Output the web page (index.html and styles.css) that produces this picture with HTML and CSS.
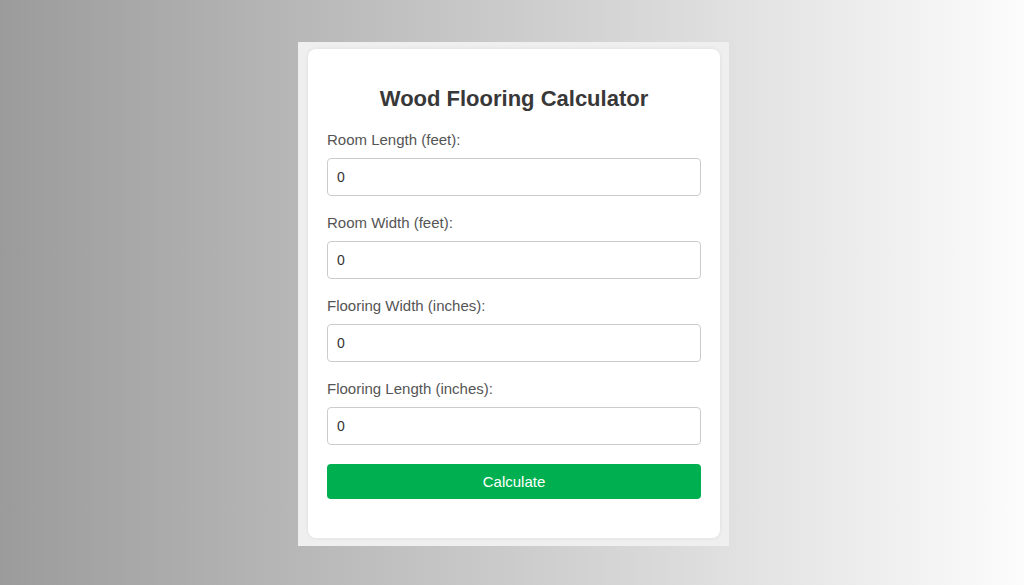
FILE: index.html
```html
<!DOCTYPE html>
<html lang="en">
    <head>
        <meta charset="UTF-8">
        <meta name="viewport" content="width=device-width, initial-scale=1.0">
        <title>Wood Flooring Calculator</title>
        <link rel="stylesheet" href="styles.css">
    </head>
    <body>
        <div class="frame">
            <div class="calculator">
                <h2>Wood Flooring Calculator</h2>
                <label for="roomLength">Room Length (feet):</label>
                <input type="number" id="roomLength" value="0">

                <label for="roomWidth">Room Width (feet):</label>
                <input type="number" id="roomWidth" value="0">

                <label for="flooringWidth">Flooring Width (inches):</label>
                <input type="number" id="flooringWidth" value="0">

                <label for="flooringLength">Flooring Length (inches):</label>
                <input type="number" id="flooringLength" value="0">

                <button type="button">Calculate</button>
            </div>
        </div>
    </body>
</html>
```

FILE: styles.css
```css
html, body {
    height: 100%;
}
body {
    margin: 0;
    font-family: "Liberation Sans", Arial, sans-serif;
    background: linear-gradient(to right, #9b9b9b, #fcfcfc);
    display: flex;
    justify-content: center;
    align-items: flex-start;
}

.frame {
    margin-top: 42px;
    margin-left: 3px;
    width: 412px;
    padding: 7px 9px 8px 10px;
    background: #efefef;
}
.calculator {
    background: #fff;
    border-radius: 8px;
    padding: 20px 19px 39px 19px;
    box-shadow: 0 0 4px rgba(0, 0, 0, 0.08);
}

h2 {
    margin: 17px 0 19px 0;
    font-size: 22px;
    line-height: 26px;
    text-align: center;
    color: #383838;
}

label {
    display: block;
    font-size: 15px;
    line-height: 17px;
    color: #555;
    margin-bottom: 10px;
}

input {
    display: block;
    box-sizing: border-box;
    width: 100%;
    height: 38px;
    margin: 0 0 18px 0;
    padding: 0 9px;
    border: 1px solid #ccc;
    border-radius: 4px;
    font-family: "Liberation Sans", Arial, sans-serif;
    font-size: 14px;
    color: #333;
    -moz-appearance: textfield;
}
input::-webkit-outer-spin-button,
input::-webkit-inner-spin-button {
    -webkit-appearance: none;
    margin: 0;
}
#flooringLength {
    margin-top: 1px;
}

button {
    display: block;
    width: 100%;
    height: 35px;
    margin-top: 19px;
    border: none;
    border-radius: 4px;
    background: #00b050;
    color: #fff;
    font-family: "Liberation Sans", Arial, sans-serif;
    font-size: 15px;
}
```
